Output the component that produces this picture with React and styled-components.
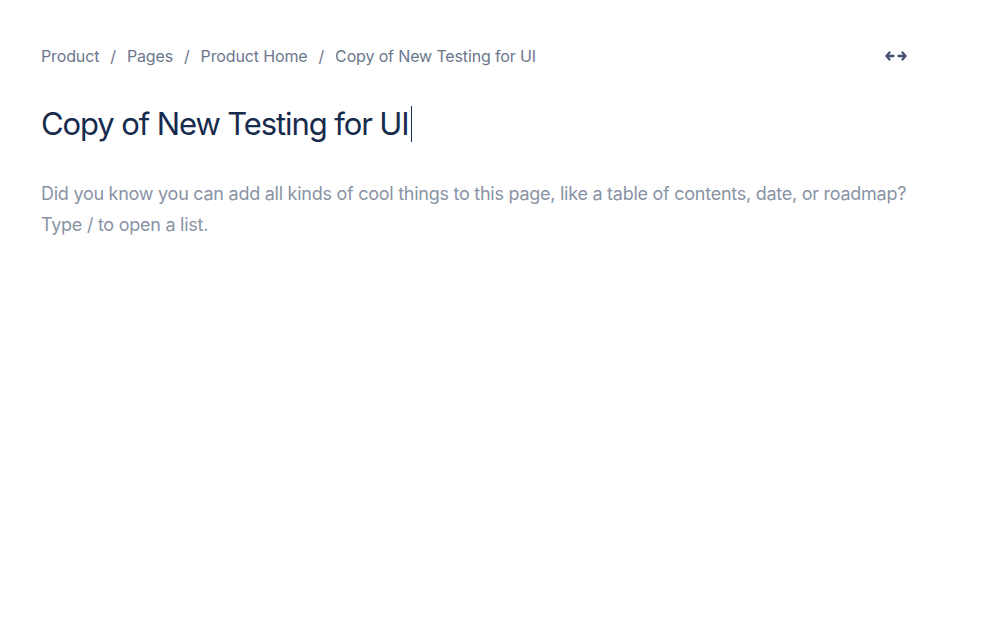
import React from "react";
import styled, { createGlobalStyle } from "styled-components";

const Global = createGlobalStyle`
  html, body { margin: 0; padding: 0; background: #fff; }
  body { font-family: Inter, "Noto Sans", sans-serif; -webkit-font-smoothing: antialiased; }
`;

const Page = styled.div`
  padding: 45px 92px 0 41px;
  display: flex;
  flex-direction: column;
`;

const TopBar = styled.div`
  display: flex;
  align-items: center;
  justify-content: space-between;
  height: 22px;
`;

const Crumbs = styled.nav`
  display: flex;
  align-items: center;
  font-size: 16px;
  letter-spacing: -0.14px;
  color: #6b778c;
`;

const Crumb = styled.span`
  color: #6b778c;
`;

const Sep = styled.span`
  margin: 0 11px;
  color: #6b778c;
`;

const IconButton = styled.button`
  border: none;
  background: none;
  padding: 0;
  display: flex;
  align-items: center;
  color: #42526e;
  cursor: pointer;
`;

const Title = styled.h1`
  margin: 35px 0 0;
  font-size: 31px;
  letter-spacing: -1.1px;
  font-weight: 400;
  color: #172b4d;
  line-height: 44px;
  display: flex;
  align-items: center;
`;

const Caret = styled.span`
  display: inline-block;
  width: 1px;
  height: 36px;
  background: #172b4d;
  margin-left: 2px;
`;

const Placeholder = styled.p`
  margin: 32px 0 0;
  font-size: 18px;
  letter-spacing: -0.26px;
  line-height: 31px;
  color: #8993a4;
  max-width: 880px;
`;

function ExpandIcon() {
  return (
    <svg width="22" height="12" viewBox="0 0 22 12" fill="none">
      <path d="M4.5 2.5 L1.5 6 L4.5 9.5 M1.5 6 H8.5" stroke="currentColor" strokeWidth="2.3" strokeLinecap="round" strokeLinejoin="round" />
      <path d="M17.5 2.5 L20.5 6 L17.5 9.5 M20.5 6 H13.5" stroke="currentColor" strokeWidth="2.3" strokeLinecap="round" strokeLinejoin="round" />
    </svg>
  );
}

export default function App() {
  const crumbs = ["Product", "Pages", "Product Home", "Copy of New Testing for UI"];
  return (
    <>
      <Global />
      <Page>
        <TopBar>
          <Crumbs>
            {crumbs.map((c, i) => (
              <React.Fragment key={c}>
                {i > 0 && <Sep>/</Sep>}
                <Crumb>{c}</Crumb>
              </React.Fragment>
            ))}
          </Crumbs>
          <IconButton aria-label="Expand width">
            <ExpandIcon />
          </IconButton>
        </TopBar>
        <Title>
          Copy of New Testing for UI
          <Caret />
        </Title>
        <Placeholder>
          Did you know you can add all kinds of cool things to this page, like a table of contents, date, or roadmap? Type / to open a list.
        </Placeholder>
      </Page>
    </>
  );
}
